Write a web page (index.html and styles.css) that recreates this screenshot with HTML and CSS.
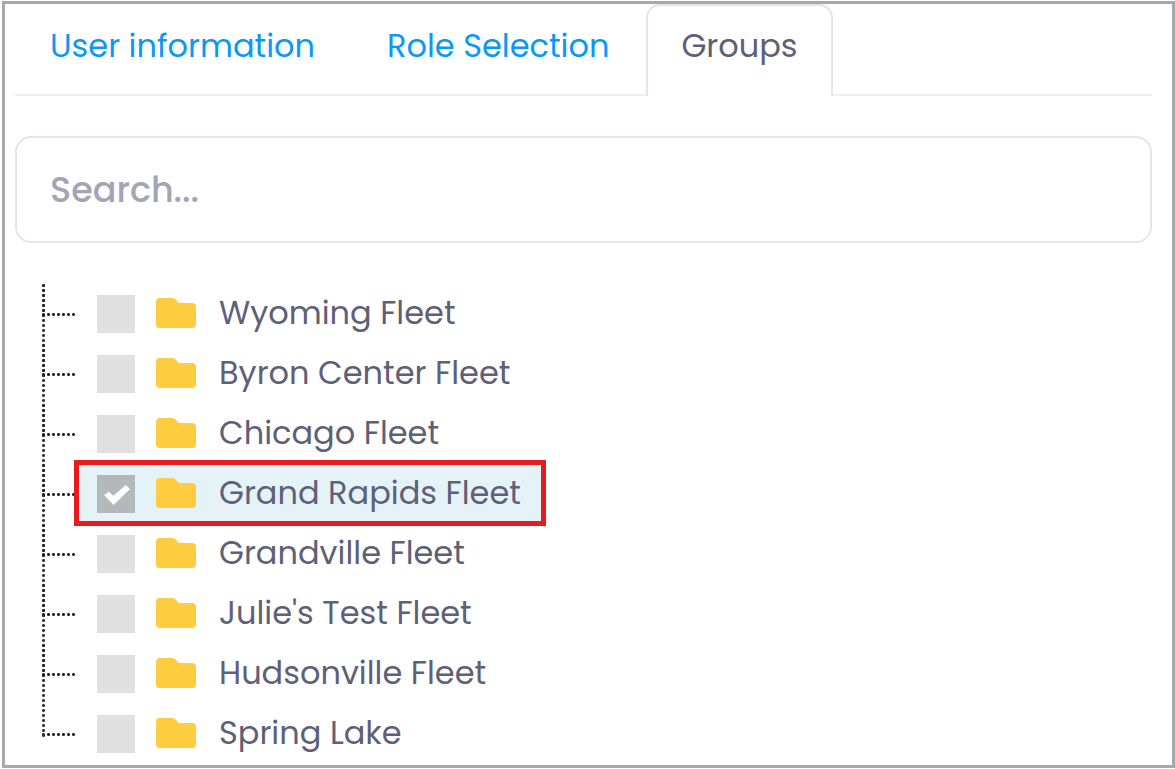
FILE: index.html
```html
<!DOCTYPE html>
<html lang="en">
<head>
<meta charset="utf-8">
<meta name="viewport" content="width=device-width, initial-scale=1">
<title>Groups</title>
<link rel="stylesheet" href="styles.css">
</head>
<body>
<svg class="sprite" aria-hidden="true">
  <symbol id="folder" viewBox="0 0 40 30">
    <path d="M3 0H16Q18 0 19 1L23 5H36Q40 5 40 9V26Q40 30 37 30H3Q0 30 0 26V4Q0 0 3 0Z" fill="#ffcd3f"/>
  </symbol>
</svg>
<main class="panel">
  <nav class="tabs">
    <a class="tab" href="#user">User information</a>
    <a class="tab" href="#role">Role Selection</a>
    <a class="tab tab-active" href="#groups" aria-current="page">Groups</a>
  </nav>
  <input class="search" type="text" placeholder="Search..." aria-label="Search">
  <ul class="tree">
    <li class="node"><span class="branch"></span><label class="item"><input class="check" type="checkbox"><svg class="folder"><use href="#folder"/></svg><span>Wyoming Fleet</span></label></li>
    <li class="node"><span class="branch"></span><label class="item"><input class="check" type="checkbox"><svg class="folder"><use href="#folder"/></svg><span>Byron Center Fleet</span></label></li>
    <li class="node"><span class="branch"></span><label class="item"><input class="check" type="checkbox"><svg class="folder"><use href="#folder"/></svg><span>Chicago Fleet</span></label></li>
    <li class="node"><span class="branch"></span><label class="item item-selected"><input class="check" type="checkbox" checked><svg class="folder"><use href="#folder"/></svg><span>Grand Rapids Fleet</span></label></li>
    <li class="node"><span class="branch"></span><label class="item"><input class="check" type="checkbox"><svg class="folder"><use href="#folder"/></svg><span>Grandville Fleet</span></label></li>
    <li class="node"><span class="branch"></span><label class="item"><input class="check" type="checkbox"><svg class="folder"><use href="#folder"/></svg><span>Julie's Test Fleet</span></label></li>
    <li class="node"><span class="branch"></span><label class="item"><input class="check" type="checkbox"><svg class="folder"><use href="#folder"/></svg><span>Hudsonville Fleet</span></label></li>
    <li class="node"><span class="branch"></span><label class="item"><input class="check" type="checkbox"><svg class="folder"><use href="#folder"/></svg><span>Spring Lake</span></label></li>
  </ul>
</main>
</body>
</html>
```
FILE: styles.css
```css
* { box-sizing: border-box; }

body {
  margin: 0;
  padding: 1px 0 1px 2px;
  background: #fff;
  color: #5e6078;
  font-family: Poppins, Inter, "Open Sans", sans-serif;
  font-size: 32px;
  line-height: 40px;
}

.sprite { position: absolute; width: 0; height: 0; }

.panel {
  border: 3px solid #a7a8ab;
  padding: 0 20px 2px 10px;
}

.tabs {
  display: flex;
  gap: 2px;
  border-bottom: 2px solid #edf1f7;
}

.tab {
  margin-bottom: -2px;
  padding: 20px 33px 30px;
  border: 2px solid transparent;
  border-bottom: 0;
  border-radius: 14px 14px 0 0;
  color: #0a98f5;
  text-decoration: none;
}

.tab-active {
  border-color: #e4e4f0;
  background: #fff;
  color: #5e6078;
}

.search {
  display: block;
  width: 100%;
  height: 107px;
  margin: 40px 0;
  padding: 0 33px;
  border: 2px solid #e4e4f0;
  border-radius: 16px;
  background: #fff;
  color: #5e6078;
  font: inherit;
  font-size: 35px;
  font-weight: 500;
}

.search::placeholder { color: #a3a4b8; opacity: 1; }

.tree {
  margin: 0;
  padding: 0 0 0 26px;
  list-style: none;
}

.node {
  display: flex;
  align-items: center;
  height: 60px;
}

/* dotted connector: a heavier run down to the elbow, a lighter run below it */
.branch {
  display: grid;
  grid-template-rows: 35px 25px;
  align-self: stretch;
  width: 34px;
  margin-right: 4px;
  background: radial-gradient(circle, #222 1px, transparent 2px) 5px 29px / 5px 5px repeat-x;
}

.branch::before,
.branch::after {
  content: "";
  width: 5px;
  background: radial-gradient(circle, #333 1px, transparent 2px) 0 0 / 5px 5px repeat-y;
}

.node:not(:last-child) .branch::before {
  background-image: radial-gradient(circle, #222 1px, #4448 2px, transparent 2px);
}

.node:last-child .branch::after { display: none; }

.item {
  display: flex;
  align-items: center;
  height: 56px;
  padding: 0 20px 0 18px;
}

.item-selected {
  background: #e5f3f9;
  outline: 5px solid #e81b1e;
}

.check {
  appearance: none;
  display: grid;
  place-items: center;
  width: 38px;
  height: 38px;
  margin: 2px 21px 0 0;
  background: #e0e0e0;
}

.check:checked {
  padding: 2px 0 0 2px;
  background: #b3b8ba;
}

.check:checked::before {
  content: "";
  width: 26px;
  height: 20px;
  background: #fff;
  clip-path: polygon(0 50%, 18% 34%, 36% 54%, 84% 0, 100% 20%, 37% 100%);
}

.folder {
  width: 40px;
  height: 30px;
  margin-right: 23px;
}
```
